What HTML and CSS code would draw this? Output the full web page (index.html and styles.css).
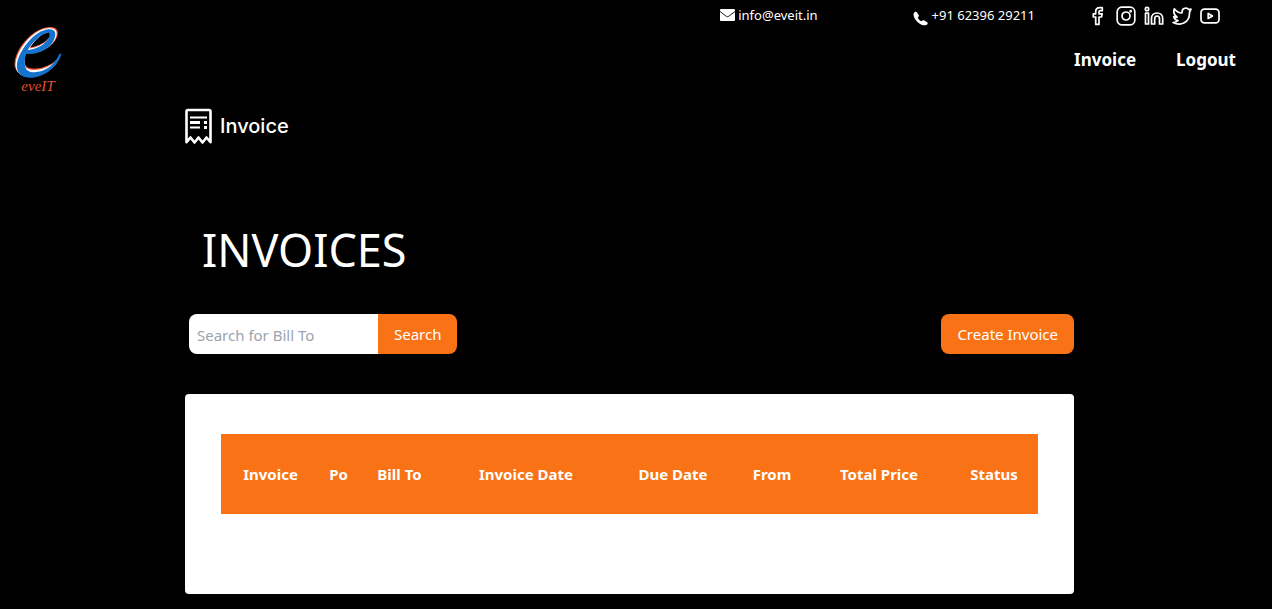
FILE: index.html
```html
<!DOCTYPE html>
<html lang="en">
<head>
<meta charset="utf-8">
<meta name="viewport" content="width=device-width, initial-scale=1">
<title>Invoices</title>
<link rel="stylesheet" href="styles.css">
</head>
<body>
<header class="site-header">
  <a class="logo" href="#" aria-label="eveIT home">
    <svg class="logo-mark" viewBox="40 33 150 160" aria-hidden="true">
      <path fill="#f0522a" fill-rule="evenodd" d="M172 135C150 172 120 184 86 184C56 184 40 164 45 138C52 98 98 40 148 36C172 34 180 48 172 68C160 98 118 118 78 114C73 130 72 146 80 155C90 163 112 162 128 158C150 152 162 144 172 135ZM92 97C118 94 142 80 152 64C158 50 150 47 140 51C118 60 102 80 92 97Z"/>
      <path fill="#fff" fill-rule="evenodd" d="M174 132C150 172 120 186 87 186C58 186 43 166 48 140C56 100 98 43 147 39C169 38 176 50 169 68C158 98 116 120 78 115C73 132 73 152 80 160C92 168 112 166 128 162C150 155 164 145 174 132ZM89 101C116 98 141 83 151 65C156 52 150 49 140 53C118 62 100 82 89 101Z"/>
      <path fill="#1473cf" fill-rule="evenodd" d="M186 115C176 156 134 189 90 189C60 189 47 168 52 144C60 106 102 48 146 43C166 41 171 53 165 70C156 100 114 122 79 117C74 134 73 153 80 164C90 175 110 174 126 169C152 160 169 140 179 118ZM84 106C112 103 138 88 148 68C153 55 147 50 138 54C116 64 96 85 84 106Z"/>
    </svg>
    <span class="logo-name">eveIT</span>
  </a>
  <div class="header-main">
    <div class="topbar">
      <a class="contact" href="mailto:info@eveit.in">
        <svg class="mail-icon" viewBox="0 0 15 12" aria-hidden="true"><rect width="15" height="12" rx="1" fill="#fff"/><path d="M0 2.5L6.3 7.3Q7.5 8.2 8.7 7.3L15 2.5" fill="none" stroke="#000" stroke-width=".9"/></svg>
        <span>info@eveit.in</span>
      </a>
      <a class="contact" href="tel:+916239629211">
        <svg class="phone-icon" viewBox="0 0 16 16" aria-hidden="true"><path d="M.8 3.2C1.4 2 3 1.3 4 2.4L5.8 5.2C6.3 6.3 5.2 7 4.8 7.5C5.1 9 7 11 8.5 11.2C9.1 10.7 10 9.8 11 10.3L14.2 12.2C15.2 13 14.5 14.3 13.4 14.9C11.5 15.8 8.3 15.2 5 12.4C1.6 9.4-.2 5.8.8 3.2Z" fill="#fff"/></svg>
        <span>+91 62396 29211</span>
      </a>
      <div class="social">
        <a href="#" aria-label="Facebook"><svg viewBox="0 0 20 20"><path d="M14.3 1.7H12C9 1.7 7.7 3.2 7.7 5.8V7.8H5.3V11H7.7V18.3H11V11H13.5L14.2 7.8H11V6C11 5.1 11.4 4.7 12.3 4.7H14.3Z"/></svg></a>
        <a href="#" aria-label="Instagram"><svg viewBox="0 0 20 20"><rect x="1.2" y="1.2" width="17.6" height="17.6" rx="4.5"/><circle cx="10" cy="10" r="4"/><circle cx="14.7" cy="5.3" r=".6"/></svg></a>
        <a href="#" aria-label="LinkedIn"><svg viewBox="0 0 20 20"><circle cx="3" cy="3" r="1.7"/><path d="M1.5 7.2H4.5V18H1.5ZM7.5 18V12.5C7.5 9 10 7 13 7S18.7 9 18.7 12.5V18H15.5V12.7C15.5 11 14.5 10 13.1 10S10.7 11 10.7 12.7V18Z"/></svg></a>
        <a href="#" aria-label="Twitter"><svg viewBox="0 0 20 20"><path d="M19 3.2L16.8 3.6C15.2 1.3 10 1.5 10 6.2V7C6.8 7.1 4.5 5.5 2.3 2.8C1.2 6.1 1.9 9 5 11.3C3.8 11.4 2.7 11.1 1.8 10.7C2.3 12.7 3.8 14.2 6 14.7C4.6 15.9 3 16.4 1 16.5C9 20.5 17.5 16.5 17.5 7.3V6.4Z"/></svg></a>
        <a href="#" aria-label="YouTube"><svg viewBox="0 0 20 20"><rect x="1" y="3.2" width="18" height="13.6" rx="3.4"/><path d="M8.2 7.5V12.5L12.5 10Z"/></svg></a>
      </div>
    </div>
    <nav class="nav">
      <a href="#">Invoice</a>
      <a href="#">Logout</a>
    </nav>
  </div>
</header>
<main class="content">
  <div class="crumb">
    <svg class="receipt-icon" viewBox="0 0 27 36" aria-hidden="true">
      <path d="M1.5 34.2V3.5Q1.5 2 3 2H24Q25.5 2 25.5 3.5V34.2L21.5 29.5L17.5 34.5L13.5 29.5L9.5 34.5L5.5 29.5Z" fill="none" stroke="#fff" stroke-width="2.6" stroke-linejoin="round"/>
      <path d="M5 9.5H22M5 19.5H15" stroke="#fff" stroke-width="1.8"/>
      <path d="M5 14.5H15M19 14.5H22M19 19.5H22" stroke="#fff" stroke-width="2.8"/>
    </svg>
    <span>Invoice</span>
  </div>
  <h1 class="title">INVOICES</h1>
  <div class="toolbar">
    <form class="search">
      <input type="text" placeholder="Search for Bill To" aria-label="Search for Bill To">
      <button class="search-button" type="button">Search</button>
    </form>
    <button class="create-button" type="button">Create Invoice</button>
  </div>
  <section class="card">
    <table class="invoices">
      <colgroup>
        <col class="col-invoice"><col class="col-po"><col class="col-bill"><col class="col-date"><col class="col-due"><col class="col-from"><col class="col-total"><col class="col-status">
      </colgroup>
      <thead>
        <tr>
          <th scope="col">Invoice</th>
          <th scope="col">Po</th>
          <th scope="col">Bill To</th>
          <th scope="col">Invoice Date</th>
          <th scope="col">Due Date</th>
          <th scope="col">From</th>
          <th scope="col">Total Price</th>
          <th scope="col">Status</th>
        </tr>
      </thead>
      <tbody></tbody>
    </table>
  </section>
</main>
</body>
</html>
```
FILE: styles.css
```css
* { box-sizing: border-box; }

body {
  margin: 0;
  background: #000;
  color: #fff;
  font: 15px/24px "Segoe UI", "Noto Sans", sans-serif;
}

a { color: inherit; text-decoration: none; }

button, input { font: inherit; border: 0; }

button {
  height: 40px;
  padding: 0 16px;
  background: #f97316;
  color: #fff;
  cursor: pointer;
  white-space: nowrap;
}

.site-header {
  display: flex;
  justify-content: space-between;
}

.logo {
  display: flex;
  flex-direction: column;
  align-items: center;
  padding: 26px 0 0 13px;
}

.logo-mark { width: 50px; height: 53px; }

.logo-name {
  color: #e2502c;
  font: italic 15px/14px "Liberation Serif", serif;
}

.header-main { padding-right: 36px; }

.topbar {
  display: flex;
  align-items: center;
  height: 32px;
  padding-right: 16px;
  font-size: 13px;
}

.contact {
  display: flex;
  align-items: center;
  gap: 3px;
  padding-bottom: 2px;
  margin-right: 95px;
}

.contact + .contact { margin-right: 53px; }

.mail-icon { width: 15px; height: 12px; }

.phone-icon { width: 16px; height: 16px; margin-top: 6px; }

.social { display: flex; gap: 8px; }

.social svg {
  display: block;
  width: 20px;
  height: 20px;
  fill: none;
  stroke: #fff;
  stroke-width: 1.7;
  stroke-linejoin: round;
}

.nav {
  display: flex;
  justify-content: flex-end;
  gap: 40px;
  padding-top: 14px;
  font-size: 17px;
  line-height: 28px;
  font-weight: 700;
}

.content { margin: 0 198px 15px 185px; }

.crumb {
  display: flex;
  align-items: center;
  gap: 8px;
  padding-top: 15px;
  font: 500 20px/36px Inter, sans-serif;
}

.receipt-icon { width: 27px; height: 36px; }

.title {
  margin: 82px 0 0;
  padding-left: 17px;
  font-size: 45px;
  line-height: 48px;
  font-weight: 400;
}

.toolbar {
  display: flex;
  justify-content: space-between;
  padding: 40px 0 40px 4px;
}

.search {
  display: flex;
  overflow: hidden;
  border-radius: 8px;
}

.search input {
  width: 189px;
  height: 40px;
  padding: 2px 8px 0;
  background: #fff;
  color: #111827;
}

.search input::placeholder { color: #9ca3af; opacity: 1; }

.create-button { border-radius: 8px; }

.card {
  min-height: 200px;
  padding: 40px 36px;
  border-radius: 4px;
  background: #fff;
}

.invoices {
  width: 100%;
  border-collapse: collapse;
  table-layout: fixed;
  background: #f97316;
}

.invoices th {
  height: 80px;
  padding: 0;
  text-align: center;
  white-space: nowrap;
}

.col-invoice { width: 99px; }
.col-po { width: 37px; }
.col-bill { width: 85px; }
.col-date { width: 168px; }
.col-due { width: 126px; }
.col-from { width: 72px; }
.col-total { width: 142px; }
.col-status { width: 88px; }
```
